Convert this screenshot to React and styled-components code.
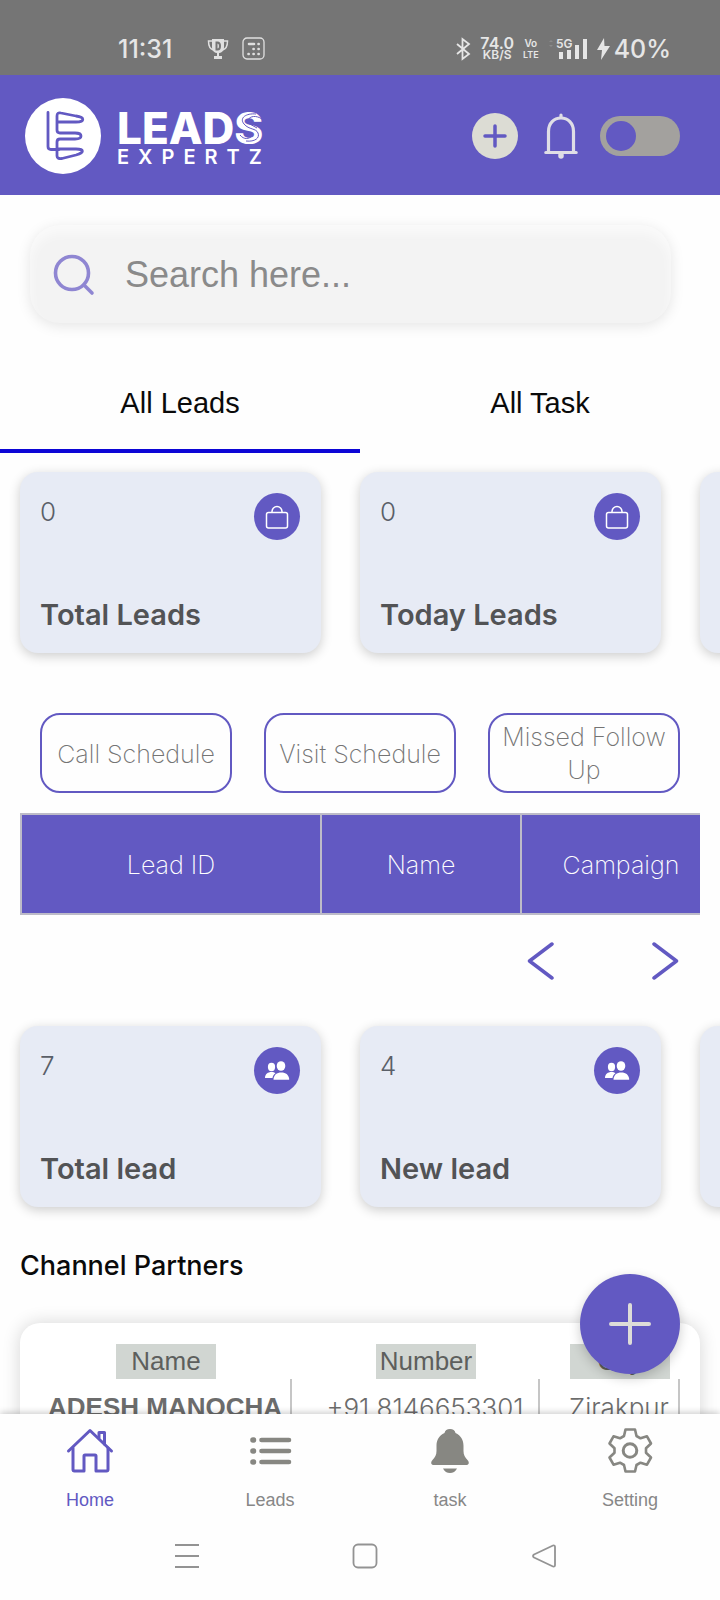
import React from 'react';
import styled, { createGlobalStyle, css } from 'styled-components';

const purple = '#6259c2';
const sans = '"Liberation Sans", Arial, sans-serif';
const inter = 'Inter, "Liberation Sans", sans-serif';

const GlobalStyle = createGlobalStyle`
  *, *::before, *::after { box-sizing: border-box; }
  body { margin: 0; background: #fefefe; font-family: ${sans}; }
  button, input { font: inherit; color: inherit; }
  button { border: 0; padding: 0; background: none; cursor: pointer; }
  svg { display: block; flex: none; }
`;

const Shell = styled.div`
  display: flex;
  flex-direction: column;
  height: 100vh;
  overflow: hidden;
`;

const StatusBar = styled.div`
  flex: none;
  display: flex;
  align-items: center;
  justify-content: space-between;
  height: 75px;
  padding: 22px 49px 0 118px;
  background: #757575;
  color: #e6e6e6;
  font-family: ${inter};
  font-size: 25px;
  font-weight: 500;
`;

const StatusGroup = styled.div`
  display: flex;
  align-items: center;
  gap: ${(p) => p.$gap}px;
`;

const Clock = styled.span`
  margin-right: 22px;
`;

const Stack = styled.span`
  display: flex;
  flex-direction: column;
  align-items: center;
  font-size: ${(p) => p.$size}px;
  line-height: 12px;
  font-weight: 600;
`;

const SmallLine = styled.span`
  font-size: ${(p) => p.$size}px;
`;

const Header = styled.header`
  flex: none;
  display: flex;
  align-items: center;
  justify-content: space-between;
  height: 120px;
  padding: 1px 40px 0 25px;
  background: ${purple};
`;

const Brand = styled.a`
  display: flex;
  align-items: center;
  gap: 16px;
  color: #fff;
  text-decoration: none;
  font-family: ${inter};
`;

const BrandText = styled.span`
  position: relative;
  display: flex;
  flex-direction: column;
  padding-top: 4px;
`;

const BrandName = styled.span`
  font-size: 44px;
  line-height: 38px;
  font-weight: 800;
`;

const BrandSub = styled.span`
  font-size: 20px;
  line-height: 20px;
  font-weight: 600;
  letter-spacing: 9px;
`;

const BrandMark = styled.svg`
  position: absolute;
  left: 119px;
  top: 6px;
`;

const HeaderActions = styled.div`
  display: flex;
  align-items: center;
  gap: 26px;
`;

const RoundButton = styled.button`
  display: grid;
  place-items: center;
  width: 46px;
  height: 46px;
  border-radius: 50%;
  background: #dcdcd4;
`;

const Toggle = styled.input`
  appearance: none;
  display: flex;
  align-items: center;
  width: 80px;
  height: 40px;
  margin: 0 0 0 -4px;
  padding: 0 6px;
  border-radius: 20px;
  background: #a3a19e;

  &::before {
    content: '';
    width: 30px;
    height: 30px;
    border-radius: 50%;
    background: ${purple};
  }

  &:checked { justify-content: flex-end; }
`;

const Main = styled.main`
  position: relative;
  flex: 1;
  min-height: 0;
  overflow: hidden auto;
  scrollbar-width: none;
`;

const SearchBox = styled.label`
  display: flex;
  align-items: center;
  gap: 30px;
  height: 98px;
  margin: 30px 49px 0 30px;
  padding: 2px 23px 0;
  border-radius: 30px;
  background: #f3f3f3;
  box-shadow: 0 3px 14px rgba(0, 0, 0, 0.1), inset 0 8px 12px rgba(255, 255, 255, 0.6);
`;

const SearchInput = styled.input`
  flex: 1;
  min-width: 0;
  border: 0;
  padding: 0;
  outline: 0;
  background: none;
  font-size: 36px;
  color: #8a8a8a;

  &::placeholder { color: #8a8a8a; opacity: 1; }
`;

const Tabs = styled.div`
  display: grid;
  grid-template-columns: 1fr 1fr;
  margin-top: 30px;
`;

const Tab = styled.button`
  height: 100px;
  padding-top: 4px;
  border-bottom: 4px solid ${(p) => (p.$active ? '#0c06d6' : 'transparent')};
  font-size: 29px;
  color: #0a0a0a;
`;

const CardRail = styled.section`
  display: flex;
  gap: 39px;
  overflow: hidden;
  padding: 19px 20px 25px;
`;

const StatCard = styled.article`
  flex: none;
  display: flex;
  flex-direction: column;
  justify-content: space-between;
  width: 301px;
  height: 181px;
  padding: 21px 21px 20px 20px;
  border-radius: 18px;
  background: #e7ebf5;
  box-shadow: 0 3px 12px rgba(0, 0, 0, 0.2);
`;

const StatTop = styled.div`
  display: flex;
  justify-content: space-between;
`;

const StatValue = styled.span`
  font-family: ${inter};
  font-size: 26px;
  line-height: 38px;
  font-weight: 300;
  color: #5a5f68;
`;

const StatBadge = styled.span`
  display: grid;
  place-items: center;
  width: 46px;
  height: 47px;
  border-radius: 50%;
  background: ${purple};
  color: #fff;
`;

const StatTitle = styled.h3`
  margin: 0;
  font-family: ${inter};
  font-size: 29px;
  line-height: 36px;
  font-weight: 600;
  color: #525355;
`;

const thin = css`
  font-family: ${inter};
  font-size: 25px;
  font-weight: 200;
`;

const FilterRow = styled.div`
  display: grid;
  grid-template-columns: repeat(3, 1fr);
  gap: 32px;
  margin: 35px 40px 20px;
`;

const FilterButton = styled.button`
  && { ${thin} }
  && { line-height: 33px; }
  height: 80px;
  padding: 2px 8px 0;
  border: 2px solid ${purple};
  border-radius: 20px;
  color: #747474;
`;

const TableClip = styled.div`
  margin: 0 20px;
  overflow: hidden;
`;

const LeadTable = styled.table`
  width: 702px;
  table-layout: fixed;
  border-collapse: collapse;
  color: #fff;
  background: ${purple};
`;

const LeadHead = styled.th`
  ${thin}
  width: ${(p) => p.$width}px;
  height: 100px;
  padding: 2px 0 0;
  border: 2px solid #bdbbc8;
  color: #fff;
`;

const Pager = styled.nav`
  display: flex;
  justify-content: flex-end;
  gap: 96px;
  height: 92px;
  padding: 0 41px;
`;

const PageButton = styled.button`
  display: grid;
  place-items: center;
`;

const SectionTitle = styled.h2`
  margin: 17px 20px 0;
  font-family: ${inter};
  font-size: 27px;
  line-height: 34px;
  font-weight: 500;
  color: #0a0a0a;
`;

const PartnerCard = styled.section`
  margin: 40px 20px 40px;
  padding: 21px 0;
  border-radius: 20px;
  background: #fff;
  box-shadow: 0 0 18px rgba(0, 0, 0, 0.16);
`;

const PartnerTable = styled.table`
  width: 100%;
  table-layout: fixed;
  border-spacing: 20px 0;
  color: #6c6c6c;
  font-size: 26px;
`;

const PartnerHead = styled.th`
  width: ${(p) => p.$width}%;
  padding: 0;
  font-weight: 400;
`;

const Chip = styled.span`
  display: block;
  width: 100px;
  margin: 0 auto;
  line-height: 35px;
  background: #d1d6d2;
  color: #5d5f5d;
`;

const PartnerCell = styled.td`
  height: 56px;
  padding: 0;
  border-right: 2px solid #c6c6c6;
  font-family: ${(p) => (p.$strong ? sans : inter)};
  font-size: 26px;
  font-weight: ${(p) => (p.$strong ? 700 : 300)};
  text-align: center;
  white-space: nowrap;
`;

const Footer = styled.footer`
  position: relative;
  flex: none;
  background: #fefefe;
  box-shadow: 0 -2px 6px rgba(0, 0, 0, 0.18);
`;

const Fab = styled.button`
  position: absolute;
  right: 40px;
  bottom: calc(100% + 40px);
  display: grid;
  place-items: center;
  width: 100px;
  height: 100px;
  border-radius: 50%;
  background: ${purple};
  box-shadow: 0 4px 12px rgba(0, 0, 0, 0.2);
`;

const BottomNav = styled.nav`
  display: grid;
  grid-template-columns: repeat(4, 1fr);
  height: 104px;
  padding-top: 12px;
`;

const NavItem = styled.a`
  display: flex;
  flex-direction: column;
  align-items: center;
  gap: 14px;
  color: ${(p) => (p.$active ? purple : '#878787')};
  font-size: 18px;
  line-height: 24px;
  text-decoration: none;
`;

const SystemNav = styled.div`
  display: grid;
  grid-template-columns: repeat(3, 1fr);
  align-items: center;
  height: 82px;
  padding: 0 87px 6px 98px;
`;

const SystemButton = styled.button`
  display: grid;
  place-items: center;
`;

function Bag() {
  return (
    <svg width="24" height="24" viewBox="0 0 24 24" fill="none" stroke="#fff" strokeWidth="1.5">
      <rect x="1.500" y="7.500" width="21" height="15.500" rx="2" />
      <path d="M7 7.500V6.500a5 5 0 0 1 10 0v1" />
    </svg>
  );
}

function People() {
  return (
    <svg width="26" height="20" viewBox="0 0 26 20" fill="#fff">
      <ellipse cx="7.500" cy="6" rx="3.600" ry="4.200" />
      <ellipse cx="17" cy="5" rx="4.300" ry="4.800" />
      <path d="M1 17c0-4 3-6 6.500-6 1.700 0 3 .4 4 1.200C9.600 13.500 8.700 15 8.500 17z" />
      <path d="M9.500 18.800c0-4.800 3.300-7.300 7.800-7.300s7.900 2.500 7.900 7.300z" />
    </svg>
  );
}

function StatList({ items, icon }) {
  return (
    <CardRail>
      {items.map(([value, title]) => (
        <StatCard key={title}>
          <StatTop>
            <StatValue>{value}</StatValue>
            <StatBadge>{icon}</StatBadge>
          </StatTop>
          <StatTitle>{title}</StatTitle>
        </StatCard>
      ))}
      <StatCard aria-hidden="true" />
    </CardRail>
  );
}

const HomeIcon = (
  <svg width="48" height="48" viewBox="0 0 48 48" fill="none" stroke="currentColor" strokeWidth="3" strokeLinecap="round" strokeLinejoin="round">
    <path d="M2.500 25 24 4.500 45.500 25" />
    <path d="M7 22v21.500q0 1.500 1.500 1.500H18V30q0-1 1-1h10q1 0 1 1v15h10.500q1.500 0 1.500-1.500V22" />
    <path d="M33 12V6.500h5.500V18" />
  </svg>
);

const ListIcon = (
  <svg width="48" height="48" viewBox="0 0 48 48" stroke="#878782" strokeWidth="4.600" strokeLinecap="round">
    <path d="M15.500 14H43M15.500 25H43M15.500 36H43" />
    <path d="M7 14h.5M7 25h.5M7 36h.5" strokeWidth="5.600" />
  </svg>
);

const BellIcon = (
  <svg width="48" height="48" viewBox="0 0 48 48" fill="#878782">
    <path d="M24 3c-3 0-5 1.600-5.500 4C13 9.500 10.500 14 10.500 20v5c0 4-1.500 6.500-4 9-2.500 3-1 5 1.500 5h32c2.500 0 4-2 1.500-5-2.500-2.500-4-5-4-9v-5c0-6-2.500-10.500-8-13C29 4.600 27 3 24 3z" />
    <path d="M17 42.500h14c-1.500 3-4 4.500-7 4.500s-5.500-1.500-7-4.500z" />
  </svg>
);

const GearIcon = (
  <svg width="48" height="48" viewBox="0 0 48 48" fill="none" stroke="#878782" strokeWidth="2.600" strokeLinejoin="round">
    <path d="M19.500 3.500h9.500l1.500 6.500 4 2.300 6.500-2L45 17.500l-5 4.800v4.400l5 4.800-4 7.200-6.500-2-4 2.300L29 45.500h-9.500L18 39l-4-2.300-6.500 2-4-7.200 5-4.800v-4.400l-5-4.800 4-7.200 6.500 2L18 10z" />
    <circle cx="24" cy="24.500" r="6.800" strokeWidth="3" />
  </svg>
);

const navItems = [
  ['Home', HomeIcon],
  ['Leads', ListIcon],
  ['task', BellIcon],
  ['Setting', GearIcon],
];

export default function App() {
  return (
    <Shell>
      <GlobalStyle />
      <StatusBar>
        <StatusGroup $gap={13}>
          <Clock>11:31</Clock>
          <svg width="22" height="22" viewBox="0 0 22 22" fill="#e0e0e0">
            <path d="M5 1h12v8c0 4-2.500 6-6 6s-6-2-6-6z" />
            <path d="M5 3H1.500c0 5 1 8 5 9M17 3h3.500c0 5-1 8-5 9" fill="none" stroke="#e0e0e0" strokeWidth="1.500" />
            <path d="M10 14h2v4h3v3H7v-3h3z" />
            <path d="M9.500 4.500v7h1q2.500 0 2.500-3.500t-2.500-3.500z" fill="none" stroke="#757575" strokeWidth="2" />
          </svg>
          <svg width="23" height="23" viewBox="0 0 23 23" fill="none" stroke="#e0e0e0">
            <rect x="1" y="1" width="21" height="21" rx="4" strokeWidth="1.300" />
            <path d="M7 7h5M16.500 7h.2M11.500 12h.2M16.500 12h.2M6.500 17h.2M11.500 17h.2M16.500 17h.2" strokeWidth="2.600" strokeLinecap="round" />
          </svg>
        </StatusGroup>
        <StatusGroup $gap={9}>
          <svg width="15" height="24" viewBox="0 0 15 24" fill="none" stroke="#e6e6e6" strokeWidth="1.800">
            <path d="M1 7l12 10-6.500 5V2L13 7 1 17" />
          </svg>
          <Stack $size={16}>
            74.0<SmallLine $size={12}>KB/S</SmallLine>
          </Stack>
          <Stack $size={10}>
            Vo<SmallLine $size={9}>LTE</SmallLine>
          </Stack>
          <svg width="40" height="24" viewBox="0 0 40 24" fill="#e6e6e6">
            <path d="M11 15h4v7h-4zM19 13h4v9h-4zM27 8h4v14h-4zM35 2h4v20h-4z" />
            <text x="8" y="11" fontFamily="Inter, sans-serif" fontSize="12" fontWeight="600">5G</text>
            <path d="M1 5l2-2 2 2zM1 8h4l-2 2z" fill="#8a8a8a" />
          </svg>
          <StatusGroup $gap={4}>
            <svg width="13" height="22" viewBox="0 0 13 22" fill="#e6e6e6">
              <path d="M7 0 0 12h5L4 22l9-14H7.500z" />
            </svg>
            <span>40%</span>
          </StatusGroup>
        </StatusGroup>
      </StatusBar>

      <Header>
        <Brand href="#home" aria-label="Leads Expertz">
          <svg width="76" height="76" viewBox="0 0 76 76" fill="none" stroke={purple} strokeWidth="2.800" strokeLinecap="round" strokeLinejoin="round">
            <circle cx="38" cy="38" r="38" fill="#fff" stroke="none" />
            <path d="M23 14.500v34q0 3 3 3h8" />
            <path d="M33 24h18c9 0 9-5 0-6l-15-3q-4-1-4 3v14q0 3 3 3h15c8 0 8 6 0 6H35q-3 0-3 3v14q0 3 5 2.500l14-3.500c9-2.500 8-6 0-6H34" />
          </svg>
          <BrandText>
            <BrandName>LEADS</BrandName>
            <BrandSub>EXPERTZ</BrandSub>
            <BrandMark width="30" height="34" viewBox="0 0 30 34" fill="none" stroke={purple} strokeWidth="1" aria-hidden="true">
              <path d="M20 3C10 2 3 7 8 13s12 4 14 9-3 9-12 8M26 8c-6-4-12-3-14 1M4 24c4 5 9 4 12 1M12 12l9 5" />
            </BrandMark>
          </BrandText>
        </Brand>
        <HeaderActions>
          <RoundButton aria-label="Add">
            <svg width="24" height="24" viewBox="0 0 24 24" stroke={purple} strokeWidth="3.500" strokeLinecap="round">
              <path d="M12 2v20M2 12h20" />
            </svg>
          </RoundButton>
          <button aria-label="Notifications">
            <svg width="34" height="46" viewBox="0 0 34 46" fill="none" stroke="#dfdee6" strokeWidth="3.200" strokeLinecap="round">
              <path d="M4.500 39V18.500C4.500 10 10 5 17 5s12.500 5 12.500 13.500V39" />
              <path d="M1.800 39.500h30.400M17 4V2" />
              <path d="M17 42v1" strokeWidth="5.500" />
            </svg>
          </button>
          <Toggle type="checkbox" role="switch" aria-label="Availability" />
        </HeaderActions>
      </Header>

      <Main>
        <SearchBox>
          <svg width="42" height="42" viewBox="0 0 42 42" fill="none" stroke="#8f86d2" strokeWidth="3.600" strokeLinecap="round">
            <circle cx="19" cy="19" r="16.500" />
            <path d="m31 31 8 8" />
          </svg>
          <SearchInput type="search" placeholder="Search here..." aria-label="Search" />
        </SearchBox>

        <Tabs role="tablist">
          <Tab role="tab" aria-selected="true" $active>All Leads</Tab>
          <Tab role="tab" aria-selected="false">All Task</Tab>
        </Tabs>

        <StatList items={[['0', 'Total Leads'], ['0', 'Today Leads']]} icon={<Bag />} />

        <FilterRow>
          <FilterButton>Call Schedule</FilterButton>
          <FilterButton>Visit Schedule</FilterButton>
          <FilterButton>Missed Follow Up</FilterButton>
        </FilterRow>

        <TableClip>
          <LeadTable>
            <thead>
              <tr>
                <LeadHead $width={300}>Lead ID</LeadHead>
                <LeadHead $width={200}>Name</LeadHead>
                <LeadHead $width={200}>Campaign</LeadHead>
              </tr>
            </thead>
          </LeadTable>
        </TableClip>

        <Pager aria-label="Lead pages">
          <PageButton aria-label="Previous">
            <svg width="28" height="38" viewBox="0 0 28 38" fill="none" stroke={purple} strokeWidth="3.500" strokeLinecap="round" strokeLinejoin="round">
              <path d="M25 2 2.500 19 25 36" />
            </svg>
          </PageButton>
          <PageButton aria-label="Next">
            <svg width="28" height="38" viewBox="0 0 28 38" fill="none" stroke={purple} strokeWidth="3.500" strokeLinecap="round" strokeLinejoin="round">
              <path d="m3 2 22.500 17L3 36" />
            </svg>
          </PageButton>
        </Pager>

        <StatList items={[['7', 'Total lead'], ['4', 'New lead']]} icon={<People />} />

        <SectionTitle>Channel Partners</SectionTitle>
        <PartnerCard>
          <PartnerTable>
            <thead>
              <tr>
                <PartnerHead $width={42}><Chip>Name</Chip></PartnerHead>
                <PartnerHead $width={38}><Chip>Number</Chip></PartnerHead>
                <PartnerHead $width={20}><Chip>City</Chip></PartnerHead>
              </tr>
            </thead>
            <tbody>
              <tr>
                <PartnerCell $strong>ADESH MANOCHA</PartnerCell>
                <PartnerCell>+91 8146653301</PartnerCell>
                <PartnerCell>Zirakpur</PartnerCell>
              </tr>
            </tbody>
          </PartnerTable>
        </PartnerCard>
      </Main>

      <Footer>
        <Fab aria-label="Add lead">
          <svg width="44" height="44" viewBox="0 0 44 44" stroke="#dddcd8" strokeWidth="4" strokeLinecap="round">
            <path d="M22 3v38M3 22h38" />
          </svg>
        </Fab>
        <BottomNav aria-label="Main">
          {navItems.map(([label, icon], i) => (
            <NavItem key={label} href={`#${label.toLowerCase()}`} $active={i === 0}>
              {icon}
              {label}
            </NavItem>
          ))}
        </BottomNav>
        <SystemNav>
          <SystemButton aria-label="Recent apps">
            <svg width="26" height="26" viewBox="0 0 26 26" stroke="#939393" strokeWidth="2">
              <path d="M1 2h24M1 13h24M1 24h24" />
            </svg>
          </SystemButton>
          <SystemButton aria-label="Home screen">
            <svg width="26" height="26" viewBox="0 0 26 26" fill="none" stroke="#939393" strokeWidth="1.800">
              <rect x="1.500" y="1.500" width="23" height="23" rx="4.500" />
            </svg>
          </SystemButton>
          <SystemButton aria-label="Back">
            <svg width="26" height="26" viewBox="0 0 26 26" fill="none" stroke="#939393" strokeWidth="1.800" strokeLinejoin="round">
              <path d="M22 2.500 3 11.500q-2 1.500 0 3l19 9q2 .5 2-1.500V4q0-2-2-1.500z" />
            </svg>
          </SystemButton>
        </SystemNav>
      </Footer>
    </Shell>
  );
}
